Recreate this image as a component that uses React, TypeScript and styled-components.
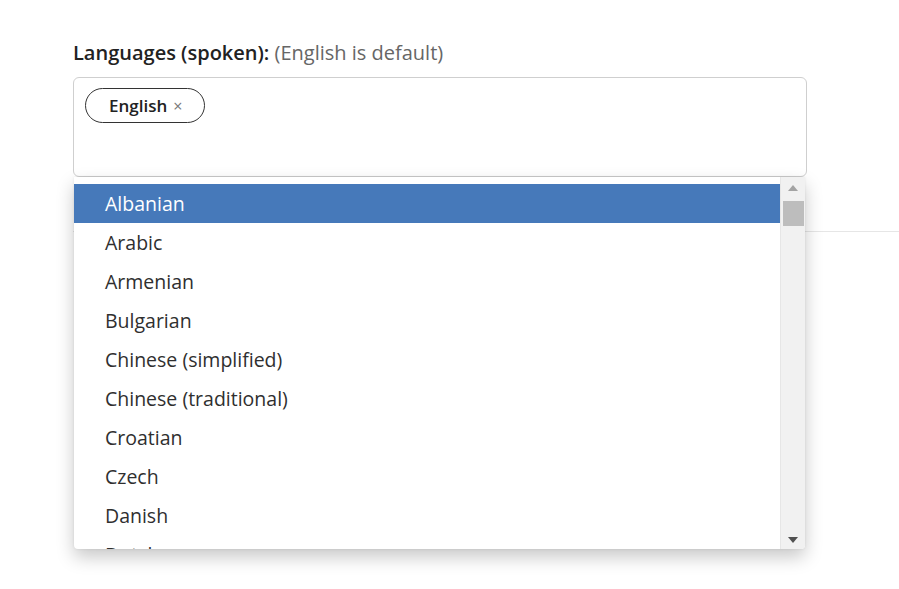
import React from 'react';
import styled, { createGlobalStyle } from 'styled-components';

const languages = [
  'Albanian',
  'Arabic',
  'Armenian',
  'Bulgarian',
  'Chinese (simplified)',
  'Chinese (traditional)',
  'Croatian',
  'Czech',
  'Danish',
  'Dutch',
];

const GlobalStyle = createGlobalStyle`
  html, body {
    margin: 0;
    padding: 0;
    background: #fff;
    font-family: "Open Sans", "Liberation Sans", sans-serif;
    color: #2b2b2b;
  }
`;

const App = () => {
  return (
    <Page>
      <GlobalStyle />
      <Field>
        <Label>
          <strong>Languages (spoken):</strong> (English is default)
        </Label>
        <InputWrap>
          <TagBox>
            <Chip>
              English <Remove>×</Remove>
            </Chip>
          </TagBox>
          <Menu>
            <List>
              {languages.map((name, i) => (
                <Option key={name} active={i === 0}>
                  {name}
                </Option>
              ))}
            </List>
            <Scrollbar>
              <Arrow viewBox="0 0 10 6">
                <path d="M0 6 L5 0 L10 6 Z" fill="#a3a3a3" />
              </Arrow>
              <Thumb />
              <Track />
              <Arrow viewBox="0 0 10 6">
                <path d="M0 0 L5 6 L10 0 Z" fill="#505050" />
              </Arrow>
            </Scrollbar>
          </Menu>
        </InputWrap>
        <Divider />
      </Field>
    </Page>
  );
};

export default App;

const Page = styled.div`
  width: 899px;
  height: 589px;
  overflow: hidden;
  padding-top: 40px;
  box-sizing: border-box;
`;

const Field = styled.div`
  display: flex;
  flex-direction: column;
  padding-left: 73px;
`;

const Label = styled.div`
  font-size: 20px;
  line-height: 26px;
  color: #666;
  margin-bottom: 11px;
  strong {
    color: #222;
    font-weight: 600;
  }
`;

const InputWrap = styled.div`
  position: relative;
  width: 734px;
`;

const TagBox = styled.div`
  height: 100px;
  box-sizing: border-box;
  border: 1px solid #cfcfcf;
  border-radius: 6px;
  padding: 10px 11px;
  display: flex;
  align-items: flex-start;
`;

const Chip = styled.div`
  display: flex;
  align-items: center;
  gap: 6px;
  height: 35px;
  box-sizing: border-box;
  padding: 0 22px 0 23px;
  border: 1px solid #333;
  border-radius: 18px;
  font-size: 17px;
  font-weight: 600;
  color: #222;
`;

const Remove = styled.span`
  font-size: 16px;
  font-weight: 400;
  color: #777;
`;

const Menu = styled.div`
  position: absolute;
  top: 100px;
  left: 1px;
  width: 731px;
  height: 372px;
  display: flex;
  background: #fff;
  border-radius: 0 0 4px 4px;
  box-shadow: 0 8px 18px rgba(0, 0, 0, 0.22), 0 0 3px rgba(0, 0, 0, 0.08);
  overflow: hidden;
  z-index: 2;
`;

const List = styled.div`
  flex: 1;
  padding-top: 7px;
  overflow: hidden;
`;

const Option = styled.div<{ active?: boolean }>`
  height: 39px;
  display: flex;
  align-items: center;
  padding-left: 31px;
  font-size: 19.5px;
  color: ${(p) => (p.active ? '#fff' : '#2f2f2f')};
  background: ${(p) => (p.active ? '#4679ba' : 'transparent')};
`;

const Scrollbar = styled.div`
  width: 25px;
  background: #f1f1f1;
  border-left: 1px solid #e6e6e6;
  display: flex;
  flex-direction: column;
  align-items: center;
  padding: 8px 0 6px;
  box-sizing: border-box;
`;

const Arrow = styled.svg`
  width: 10px;
  height: 6px;
  flex: none;
`;

const Thumb = styled.div`
  width: 21px;
  height: 25px;
  margin-top: 10px;
  background: #bdbdbd;
`;

const Track = styled.div`
  flex: 1;
`;

const Divider = styled.div`
  margin-top: 54px;
  height: 1px;
  background: #e6e6e6;
  margin-right: -200px;
`;
